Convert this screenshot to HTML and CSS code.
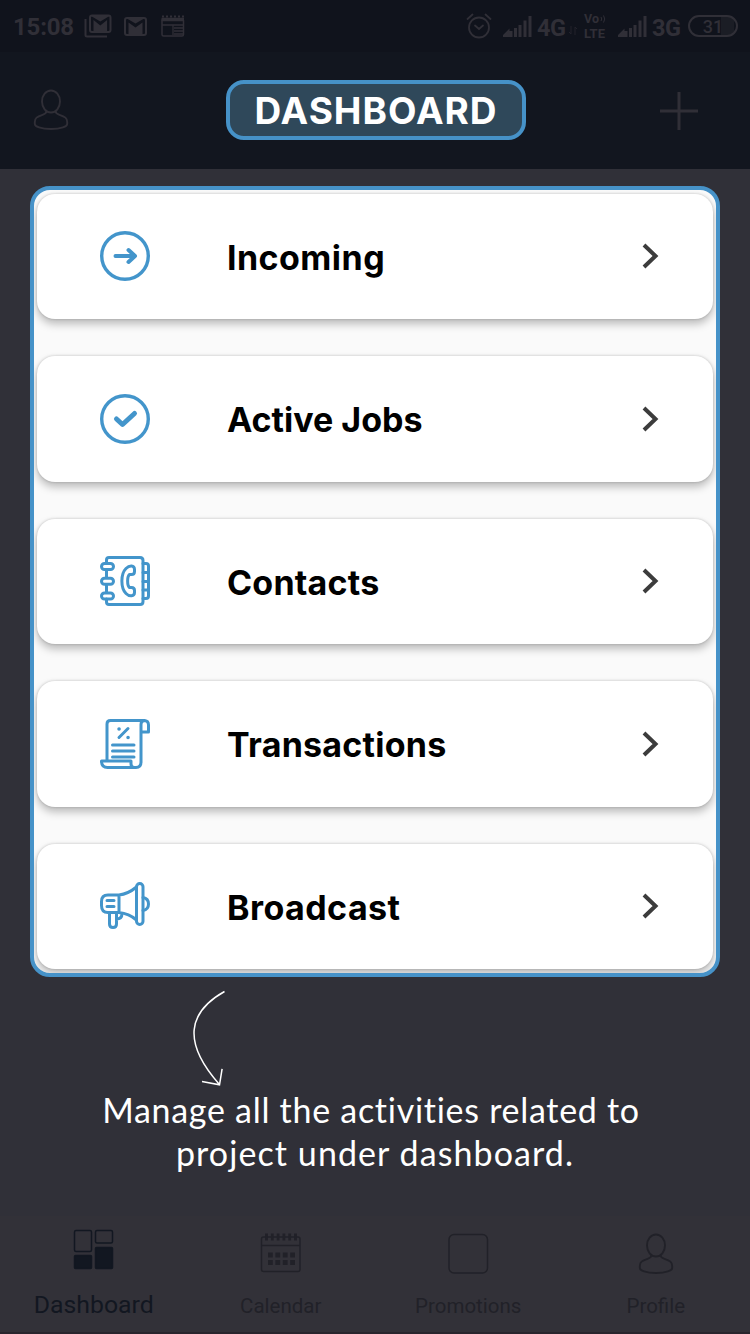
FILE: index.html
```html
<!DOCTYPE html>
<html lang="en">
<head>
<meta charset="utf-8">
<title>Dashboard</title>
<link rel="stylesheet" href="styles.css">
</head>
<body>
<div class="screen">
  <div class="status">
    <span class="time">15:08</span>
    <svg class="notices" width="102" height="26" viewBox="84 13 102 26" fill="none" stroke="currentColor" stroke-width="2">
      <path d="M85.500 19V35q0 1.500 1.500 1.500H107"/>
      <rect x="90" y="15.500" width="20.500" height="16.500" rx="2"/>
      <path d="M93.500 32V20l6.800 5.500 6.800-5.500v12z" fill="currentColor" stroke="none"/>
      <path d="M91 16h18.500l-9.200 5.500z" fill="currentColor" stroke="none"/>
      <rect x="125" y="18" width="21" height="17" rx="2"/>
      <path d="M128.500 35V22.500l7 5 7-5V35z" fill="currentColor" stroke="none"/>
      <path d="M126 18h19l-9.500 5.500z" fill="currentColor" stroke="none"/>
      <rect x="162" y="19" width="21.500" height="17" rx="1.500" stroke-width="1.500"/>
      <path d="M161.500 19.500H184" stroke-width="3.500"/>
      <path d="M162 16.500H184" stroke-width="2" stroke-dasharray="2 2"/>
      <path d="M162 25H183M173 25v10M174 28h9M174 31h9M174 34h9" stroke-width="1.300"/>
    </svg>
    <span class="push"></span>
    <svg class="alarm" width="26" height="26" viewBox="466 13 26 26" fill="none" stroke="currentColor" stroke-width="1.800" stroke-linecap="round">
      <circle cx="479" cy="27.500" r="10"/><path d="M475 25.500l4 3.500 4-3.500M467.500 19l5-4.500M490.500 19l-5-4.500"/>
    </svg>
    <svg class="signal" width="29" height="21" viewBox="0 0 29 21" fill="none" stroke="currentColor" stroke-width="3.400"><path d="M0 21l5-5v5zM8 21v-6M12.500 21v-9M17 21V9M22 21V4.500M27 21V0" /></svg>
    <span class="net net-a">4G</span>
    <svg class="updown" width="8" height="10" viewBox="0 0 8 10" fill="none" stroke="currentColor"><path d="M2 0v8l-2-2M6 9V1l2 2"/></svg>
    <span class="volte">
      <span class="vo">Vo<svg width="6" height="8" viewBox="0 0 6 8" fill="none" stroke="currentColor"><path d="M1 2q1.500 2 0 4M3.500 0.500q2.500 3.500 0 7"/></svg></span>
      <span class="lte">LTE</span>
    </span>
    <svg class="signal signal-b" width="29" height="21" viewBox="0 0 29 21" fill="none" stroke="currentColor" stroke-width="3.400"><path d="M0 21l5-5v5zM8 21v-6M12.500 21v-9M17 21V9M22 21V4.500M27 21V0"/></svg>
    <span class="net net-b">3G</span>
    <span class="battery"><span>31</span></span>
  </div>

  <header class="header">
    <svg class="person" width="36" height="42" viewBox="0 0 36 42"><use href="#person"/></svg>
    <h1 class="title"><span>DASHBOARD</span></h1>
    <svg class="plus" width="38" height="38" viewBox="0 0 38 38" fill="none" stroke="currentColor" stroke-width="3"><path d="M19 0v38M0 19h38"/></svg>
  </header>

  <main class="panel">
    <a class="card">
      <svg class="icon" viewBox="0 0 50 50"><circle cx="25" cy="25" r="23.300" stroke-width="3.400"/><path d="M15.500 25H35M28.500 19l6.500 6-6.500 6" stroke-width="4"/></svg>
      <span class="label l1">Incoming</span>
      <svg class="chev" viewBox="0 0 17 26"><path d="M2 2l11.500 11L2 24"/></svg>
    </a>
    <a class="card">
      <svg class="icon" viewBox="0 0 50 50"><circle cx="25" cy="25" r="23.300" stroke-width="3.400"/><path d="M16.500 25l6 5.500L34.500 19.500" stroke-width="5"/></svg>
      <span class="label l2">Active Jobs</span>
      <svg class="chev" viewBox="0 0 17 26"><path d="M2 2l11.500 11L2 24"/></svg>
    </a>
    <a class="card">
      <svg class="icon" viewBox="0 0 50 50">
        <path d="M6.500 7V4q0-2.500 2.500-2.500H40q3 0 3 3v41q0 3-3 3H9q-2.500 0-2.500-2.500V43M6.500 14v7.500M6.500 29v7.500"/>
        <rect x="1.500" y="7.500" width="12" height="6" rx="3"/><rect x="1.500" y="22.300" width="12" height="6" rx="3"/><rect x="1.500" y="37" width="12" height="6" rx="3"/>
        <path d="M43 7.500h3q2.500 0 2.500 2.500v30q0 2.500-2.500 2.500h-3M43 16.500h5.500M43 25.500h5.500M43 34h5.500"/>
        <path d="M34.500 13.500C34.500 9 29.500 9 26 12.500 20.500 18 20.500 32 26 37.500c3.500 3.500 8.500 3 8.500-1v-2c0-2-1-3-3-3h-2c-2.500-2-2.500-11 0-13h2c2 0 3-1 3-3z"/>
      </svg>
      <span class="label l3">Contacts</span>
      <svg class="chev" viewBox="0 0 17 26"><path d="M2 2l11.500 11L2 24"/></svg>
    </a>
    <a class="card">
      <svg class="icon" viewBox="0 0 50 50">
        <path d="M7 41V5q0-3.500 3.500-3.500H44q4.500 0 4.500 4.500v7H41M45 1.500q-4 0-4 4V43q0 5.500-5 5.500H7.500Q1.500 48.500 1.500 42H31v3q0 3.500 3.500 3.500"/>
        <path d="M19 18.500l9-9M12.500 26H34M12.500 32H34M12.500 38H34"/>
        <path d="M19 10h.1M28 18.500h.1" stroke-width="3.500"/>
      </svg>
      <span class="label l4">Transactions</span>
      <svg class="chev" viewBox="0 0 17 26"><path d="M2 2l11.500 11L2 24"/></svg>
    </a>
    <a class="card">
      <svg class="icon" viewBox="0 0 50 50">
        <path d="M19 14H8q-6.500 0-6.500 6.500v4Q1.500 31.500 8 31.500H19zM19 14q9-1 17.500-8M19 31.500q10 1 17.500 7.500"/>
        <rect x="36.500" y="2.500" width="6.500" height="41" rx="3.200"/>
        <path d="M43 16.500q5.500 1 5.500 6.500t-5.500 6.500M7 19.500h7M7 25.500h7M9.500 32v11q0 3.500 3.500 3.500t3.500-3.500V32M16.500 38q5.500 0 5.500-5.500"/>
      </svg>
      <span class="label l5">Broadcast</span>
      <svg class="chev" viewBox="0 0 17 26"><path d="M2 2l11.500 11L2 24"/></svg>
    </a>
  </main>

  <section class="hint">
    <svg class="arrow" width="40" height="100" viewBox="190 988 40 100"><path d="M224.500 991.500C188 1012 182 1042 219 1084M202 1081.500l17.500 3.300 2.600-16"/></svg>
    <p class="line la">Manage all the activities related to</p>
    <p class="line lb">project under dashboard.</p>
  </section>

  <nav class="tabs">
    <a class="tab active">
      <svg width="42" height="42" viewBox="0 0 42 42" fill="none" stroke="currentColor" stroke-width="1.500"><rect x="1.500" y="1.500" width="17" height="21" rx="1.500"/><rect x="22.500" y="1.500" width="17" height="12.500" rx="1.500"/><rect x="1.500" y="26.500" width="17" height="13" rx="1" fill="currentColor"/><rect x="22.500" y="18.500" width="17" height="21" rx="1" fill="currentColor"/></svg>
      <span>Dashboard</span>
    </a>
    <a class="tab">
      <svg width="42" height="42" viewBox="0 0 42 42" fill="none" stroke="currentColor" stroke-width="1.500"><rect x="1.500" y="4" width="38.500" height="34.500" rx="2"/><path d="M1.500 12.500H40"/><path d="M6.500 0.500v7M12.300 0.500v7M18.100 0.500v7M23.900 0.500v7M29.700 0.500v7M35.500 0.500v7" stroke-width="2.800"/><path d="M8 22h27M8 29.500h27" stroke-width="4.800" stroke-dasharray="4.800 2.600"/></svg>
      <span>Calendar</span>
    </a>
    <a class="tab">
      <svg width="42" height="42" viewBox="0 0 42 42" fill="none" stroke="currentColor" stroke-width="1.500"><rect x="2" y="1.500" width="38.500" height="38.500" rx="5"/></svg>
      <span>Promotions</span>
    </a>
    <a class="tab">
      <svg width="36" height="42" viewBox="0 0 36 42"><g id="person" fill="none" stroke="currentColor" stroke-width="1.900"><ellipse cx="18" cy="12.500" rx="9" ry="11"/><path d="M13.500 22q0 2.500-4 3.800C4 27.700 1.800 29 1.800 33v2c0 2.500 6 5 16.200 5s16.200-2.500 16.200-5v-2c0-4-2.200-5.300-7.700-7.200q-4-1.300-4-3.800"/></g></svg>
      <span>Profile</span>
    </a>
  </nav>
</div>
</body>
</html>
```
FILE: styles.css
```css
* { box-sizing: border-box; }
body { margin: 0; }
.screen {
  width: 750px; height: 1334px; overflow: hidden;
  display: flex; flex-direction: column;
  background: #303038;
  font-family: Roboto, "Liberation Sans", sans-serif;
}
.screen svg { display: block; flex: none; }
.status {
  flex: none; height: 52px; padding: 0 12px 0 13px;
  display: flex; align-items: center;
  background: #10131c; color: #302f37;
}
.time { width: 71px; font-size: 24px; font-weight: 700; white-space: nowrap; padding-top: 2px; letter-spacing: -.2px; }
.push { flex: 1; }
.alarm { margin-right: 11px; }
.signal { margin-right: 5px; stroke-width: 3px; }
.net { font-size: 23.500px; font-weight: 700; padding-top: 3px; white-space: nowrap; letter-spacing: -.5px; }
.net-a { width: 31px; }
.net-b { width: 36px; }
.updown { margin: 10px 7px 0 1px; opacity: .6; }
.volte { width: 34px; height: 30px; display: flex; flex-direction: column; justify-content: space-between; white-space: nowrap; font-weight: 700; }
.vo { display: flex; align-items: center; gap: 1px; font-size: 12.500px; line-height: 15px; }
.lte { font-size: 13px; line-height: 15px; }
.signal-b { margin-right: 5px; }
.battery {
  width: 50px; height: 22px; border: 2px solid #302f37; border-radius: 11px;
  font-size: 18px; font-weight: 500; line-height: 19px; text-align: center;
  background: linear-gradient(90deg, transparent 31px, #1b1d25 31px 44px, transparent 44px);
}
.header {
  flex: none; height: 117px; padding: 0 52px 0 33px;
  display: flex; justify-content: space-between; align-items: center;
  background: #12161f; color: #302f37;
}
.person { margin-top: -2px; }
.title {
  width: 300px; height: 60px; margin: 0 0 1px 23px;
  border: 4px solid #4692c8; border-radius: 18px; background: #2f485a;
  color: #fff; font: 700 37px/53px Inter, sans-serif; text-align: center; white-space: nowrap;
}
.title span { letter-spacing: 1px; }
.panel {
  flex: none; width: 690px; height: 791px; margin: 17px auto 0; padding: 3.500px 3px 0;
  display: flex; flex-direction: column; gap: 37px; overflow: hidden;
  border: 4px solid #4692c8; border-radius: 20px; background: #fafafa;
}
.card {
  flex: none; height: 125.500px; padding: 0 54px 0 63px;
  display: flex; align-items: center;
  border-radius: 18px; background: #fff;
  box-shadow: 0 5px 9px rgba(0,0,0,.25), 0 0 3px rgba(0,0,0,.2);
}
.icon { width: 50px; height: 50px; margin-right: 77px; fill: none; stroke: #4395cb; stroke-width: 3; stroke-linecap: round; stroke-linejoin: round; }
.label { flex: 1; color: #000; font: 700 34px/42px Inter, sans-serif; padding-top: 3px; white-space: nowrap; }
.l1 { letter-spacing: .45px; }
.l3 { letter-spacing: .2px; }
.l4 { letter-spacing: .25px; }
.l5 { letter-spacing: .45px; }
.chev { width: 17px; height: 26px; fill: none; stroke: #3c3c3c; stroke-width: 4; }
.hint { flex: 1; display: flex; flex-direction: column; align-items: center; padding-top: 11px; color: #fff; }
.arrow { align-self: flex-start; margin-left: 190px; fill: none; stroke: #fff; stroke-width: 1.500; }
.line { margin: 0; font: 400 34px/43px Lato, sans-serif; white-space: nowrap; }
.la { margin-left: -8px; letter-spacing: .72px; }
.lb { letter-spacing: 1.080px; }
.tabs {
  flex: none; height: 118px; padding-top: 12px;
  display: grid; grid-template-columns: repeat(4, 1fr);
  background: #323138; border-bottom: 2px solid #29252d; color: #212128;
}
.tab { display: flex; flex-direction: column; align-items: center; gap: 15px; padding: 5px 1px 0 0; font-size: 20.500px; line-height: 32px; }
.tab.active { padding: 1px 0 0; gap: 18px; color: #121721; font-size: 24.800px; }
```
